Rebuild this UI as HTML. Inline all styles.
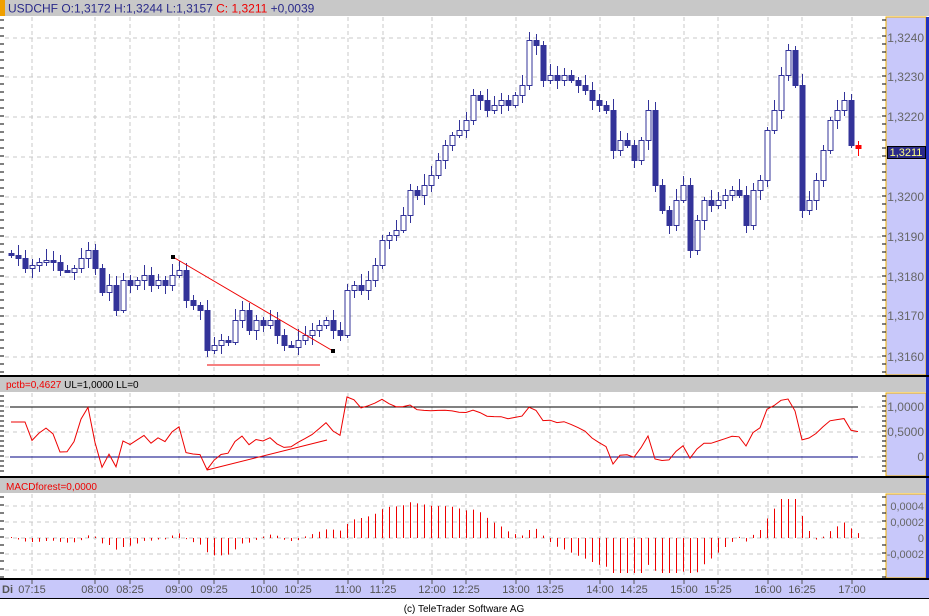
<!DOCTYPE html><html><head><meta charset="utf-8"><style>
body{margin:0;width:929px;height:616px;background:#fff;overflow:hidden;font-family:"Liberation Sans",sans-serif}
svg{display:block}
</style></head><body>
<svg id="s" width="929" height="616" xmlns="http://www.w3.org/2000/svg" font-family="Liberation Sans, sans-serif">
<rect x="0" y="0" width="929" height="616" fill="#fff"/>
<rect x="0" y="0" width="929" height="16" fill="#c8c8c8"/>
<rect x="0" y="0" width="5" height="16" fill="#f0a000"/>
<text x="8" y="12.5" font-size="12" fill="#2a2a8a">USDCHF O:1,3172 H:1,3244 L:1,3157 <tspan fill="#e00">C: 1,3211</tspan> +0,0039</text>
<rect x="0" y="377" width="929" height="15" fill="#c8c8c8"/>
<text x="6" y="388" font-size="10" fill="#e00">pctb=0,4627 <tspan fill="#000">UL=1,0000 LL=0</tspan></text>
<rect x="0" y="478" width="929" height="15" fill="#c8c8c8"/>
<text x="6" y="490" font-size="10" fill="#e00">MACDforest=0,0000</text>
<rect x="886" y="17" width="40" height="358" fill="#c8c8fa" stroke="#f0b000" stroke-width="1"/>
<rect x="886" y="393" width="40" height="83" fill="#c8c8fa" stroke="#f0b000"/>
<rect x="886" y="494" width="40" height="84" fill="#c8c8fa" stroke="#f0b000"/>
<rect x="926" y="17" width="3" height="562" fill="#2030c0"/>
<rect x="0" y="580" width="929" height="18" fill="#c8c8fa"/>
<line x1="0" y1="598.5" x2="929" y2="598.5" stroke="#000"/>
<line x1="0" y1="376" x2="929" y2="376" stroke="#000" stroke-width="2"/>
<line x1="0" y1="477" x2="929" y2="477" stroke="#000" stroke-width="2"/>
<line x1="0" y1="579" x2="929" y2="579" stroke="#000" stroke-width="2"/>
<text x="2" y="593" font-size="11" font-weight="bold" fill="#555">Di</text>
<g id="grid"></g><g id="c"></g>
<text x="464" y="612" font-size="10" text-anchor="middle" fill="#000">(c) TeleTrader Software AG</text>
</svg>
<script>
var NS="http://www.w3.org/2000/svg",S=document.getElementById('s'),G=document.getElementById('grid'),C=document.getElementById('c');
function el(t,a,p){var e=document.createElementNS(NS,t);for(var k in a)e.setAttribute(k,a[k]);(p||C).appendChild(e);return e}
var tx=[[32,"07:15"],[95,"08:00"],[130,"08:25"],[179,"09:00"],[214,"09:25"],[264,"10:00"],[298,"10:25"],[348,"11:00"],[383,"11:25"],[432,"12:00"],[466,"12:25"],[516,"13:00"],[550,"13:25"],[600,"14:00"],[634,"14:25"],[684,"15:00"],[718,"15:25"],[768,"16:00"],[802,"16:25"],[852,"17:00"]];
tx.forEach(function(t){[[17,375],[393,476],[494,578]].forEach(function(r){el('line',{x1:t[0],y1:r[0],x2:t[0],y2:r[1],stroke:'#c8c8c8','stroke-dasharray':'4,3'},G)});
el('line',{x1:t[0],y1:580,x2:t[0],y2:584,stroke:'#555'},G);
var tt=el('text',{x:t[0],y:593,'font-size':11,'text-anchor':'middle',fill:'#555'},G);tt.textContent=t[1];});
var pl=[[38,"1,3240"],[77,"1,3230"],[117,"1,3220"],[157,"1,3210"],[197,"1,3200"],[237,"1,3190"],[277,"1,3180"],[316,"1,3170"],[357,"1,3160"]];
pl.forEach(function(p){el('line',{x1:5,y1:p[0],x2:884,y2:p[0],stroke:'#c8c8c8','stroke-dasharray':'4,4'},G);
if(p[1]!="1,3210"){var t=el('text',{x:924,y:p[0]+4,'font-size':12,'text-anchor':'end',fill:'#666'},G);t.textContent=p[1];}});
for(var y=20;y<375;y+=8){el('line',{x1:0,y1:y,x2:4,y2:y,stroke:'#000'},G);el('line',{x1:882,y1:y,x2:886,y2:y,stroke:'#000'},G);}
[[407,"1,0000"],[432,"0,5000"],[457,"0"]].forEach(function(p){el('line',{x1:5,y1:p[0],x2:884,y2:p[0],stroke:'#c8c8c8','stroke-dasharray':'4,4'},G);var t=el('text',{x:924,y:p[0]+4,'font-size':12,'text-anchor':'end',fill:'#666'},G);t.textContent=p[1];});
[[506,"0,0004"],[522,"0,0002"],[538,"0"],[554,"-0,0002"],[570,""]].forEach(function(p){el('line',{x1:5,y1:p[0],x2:884,y2:p[0],stroke:'#c8c8c8','stroke-dasharray':'4,4'},G);var t=el('text',{x:924,y:p[0]+4,'font-size':11,'text-anchor':'end',fill:'#666'},G);t.textContent=p[1];});
for(var y=396;y<476;y+=5){el('line',{x1:0,y1:y,x2:4,y2:y,stroke:'#000'},G);el('line',{x1:882,y1:y,x2:886,y2:y,stroke:'#000'},G);}
for(var y=497;y<578;y+=8){el('line',{x1:0,y1:y,x2:4,y2:y,stroke:'#000'},G);el('line',{x1:882,y1:y,x2:886,y2:y,stroke:'#000'},G);}
el('line',{x1:10,y1:407,x2:858,y2:407,stroke:'#000'},G);el('line',{x1:10,y1:457,x2:858,y2:457,stroke:'#000080'},G);
var cl=[255,258,268,265,262,260,262,270,270,268,258,250,268,292,285,310,280,285,280,275,285,280,285,275,270,300,305,310,350,345,340,340,320,310,330,320,325,320,335,345,345,340,335,330,325,320,330,335,290,285,290,280,265,240,235,230,215,190,195,185,175,160,145,135,130,120,95,100,110,105,100,105,95,85,40,45,80,75,80,75,80,85,90,100,105,110,150,140,145,160,140,110,185,210,225,200,185,250,220,200,205,200,195,190,195,225,190,180,130,110,75,50,85,210,200,180,150,120,110,100,145,148];
var pr=[],prev=253;
for(var i=0;i<cl.length;i++){var x=11+i*7,o=prev,c=cl[i],hi=Math.min(o,c)-3-(i*7%9),lo=Math.max(o,c)+3+(i*5%8);
if(Math.abs(o-c)<2)c=o+2;
var col=i==cl.length-1?'#f00':'#333399';
el('line',{x1:x+.5,y1:hi,x2:x+.5,y2:lo,stroke:col});
var bull=c<o;
el('rect',{x:x-2,y:Math.min(o,c)+.5,width:5,height:Math.abs(o-c),fill:bull&&i<cl.length-1?'#fff':col,stroke:col});
prev=c;pr.push(-c);}
var pts=[],N=20;
for(var i=0;i<pr.length;i++){var a=pr.slice(Math.max(0,i-N+1),i+1),m=a.reduce(function(s,v){return s+v},0)/a.length,sd=Math.sqrt(a.reduce(function(s,v){return s+(v-m)*(v-m)},0)/a.length)||1;
var b=(pr[i]-(m-2*sd))/(4*sd);if(i<3)b=0.7;b=Math.max(-0.3,Math.min(1.2,b));pts.push((11+i*7)+','+(457-b*50).toFixed(1));}
el('polyline',{points:pts.join(' '),fill:'none',stroke:'#e00'});
var e12=pr[0],e26=pr[0],sg=0;
for(var i=0;i<pr.length;i++){e12+=(pr[i]-e12)*2/13;e26+=(pr[i]-e26)*2/27;var m=e12-e26;sg+=(m-sg)*2/10;var h=(m-sg)*2.6;h=Math.max(-34,Math.min(38,h));
var x=11+i*7+.5;el('line',{x1:x,y1:538,x2:x,y2:538-h-(h>=0?1:-1),stroke:'#e00'});}
el('line',{x1:173,y1:257,x2:333,y2:351,stroke:'#e00'});
el('line',{x1:207,y1:365,x2:320,y2:365,stroke:'#e00'});
el('line',{x1:207,y1:470,x2:327,y2:440,stroke:'#e00'});
el('rect',{x:171,y:255,width:4,height:4,fill:'#000'});el('rect',{x:331,y:349,width:4,height:4,fill:'#000'});
el('rect',{x:887.5,y:146.5,width:38,height:12,fill:'#2a2a8a',stroke:'#000'});
var t=el('text',{x:906,y:156,'font-size':11,'text-anchor':'middle',fill:'#ffff80'});t.textContent="1,3211";
</script>
</body></html>
